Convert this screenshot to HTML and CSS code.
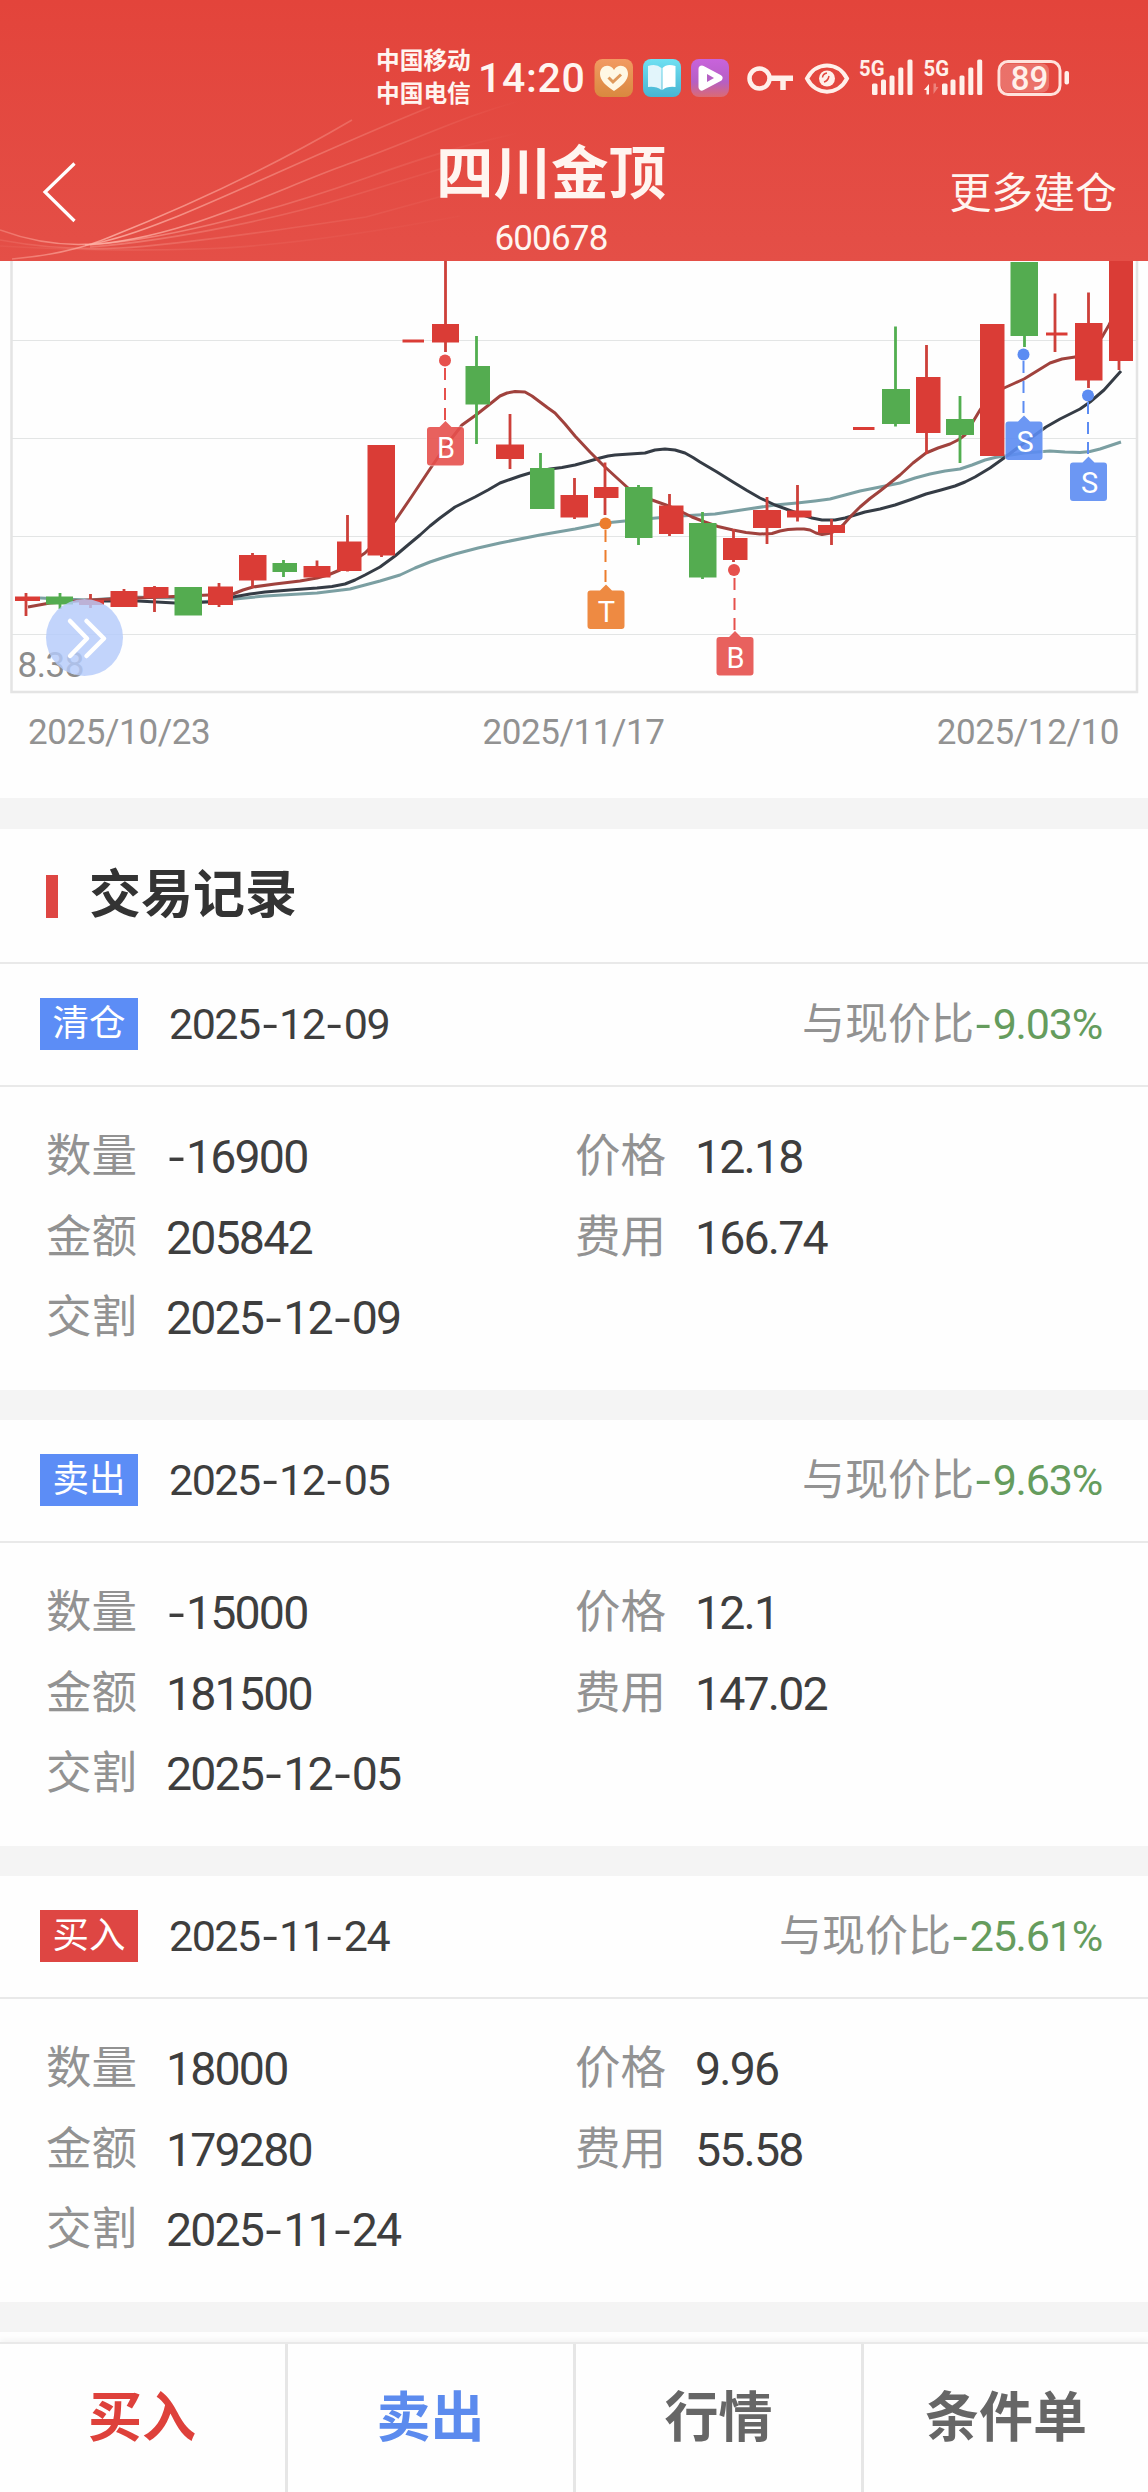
FILE: index.html
```html
<!DOCTYPE html>
<html lang="zh-CN">
<head>
<meta charset="utf-8">
<title>四川金顶 600678</title>
<link rel="stylesheet" href="styles.css">
</head>
<body>
<header class="header">
  <svg class="waves" viewBox="0 0 1148 261" fill="none" stroke-width="1.6">
    <defs>
      <linearGradient id="fade" gradientUnits="userSpaceOnUse" x1="0" y1="0" x2="520" y2="0">
        <stop offset="0" stop-color="#ffb4a8" stop-opacity=".35"/>
        <stop offset=".22" stop-color="#ffb4a8" stop-opacity=".8"/>
        <stop offset=".5" stop-color="#ffb4a8" stop-opacity=".45"/>
        <stop offset="1" stop-color="#ffb4a8" stop-opacity="0"/>
      </linearGradient>
    </defs>
    <g stroke="url(#fade)">
      <path d="M12 259Q70 254 110 237C190 205 270 168 352 120"/>
      <path d="M0 230Q46 247 92 244C160 232 270 172 430 107"/>
      <path d="M85 245C180 240 270 192 348 164S470 112 540 96"/>
      <path d="M90 245C180 238 290 205 366 178S470 144 531 130" opacity=".7"/>
      <path d="M90 247C180 240 290 215 348 197L450 166" opacity=".5"/>
      <path d="M0 240Q60 251 120 248T366 217L450 194" opacity=".4"/>
      <path d="M0 246Q100 252 200 249T460 216" opacity=".2"/>
    </g>
  </svg>

  <div class="status">
    <div class="carriers"><span>中国移动</span><span>中国电信</span></div>
    <span class="clock">14:20</span>
    <svg class="status-icons" width="490" height="50" viewBox="590 53 490 50">
      <defs>
        <linearGradient id="io" x2="0" y2="1"><stop stop-color="#f29a62"/><stop offset="1" stop-color="#d9893f"/></linearGradient>
        <linearGradient id="ib" x2="0" y2="1"><stop stop-color="#6fe0f2"/><stop offset="1" stop-color="#48b4d2"/></linearGradient>
        <linearGradient id="ip" x2="0" y2="1"><stop stop-color="#c863dc"/><stop offset=".6" stop-color="#b65fc4"/><stop offset="1" stop-color="#dc6a72"/></linearGradient>
      </defs>
      <rect x="594.5" y="59" width="38.5" height="38" rx="8" fill="url(#io)"/>
      <path d="M614 91C606 86 600 80 600 74C600 65 610 63 614 70C618 63 628 65 628 74C628 80 622 86 614 91Z" fill="#fff8e4"/>
      <path d="M608.500 77.500l4.500 4.500 8-7.500" fill="none" stroke="#df9a5c" stroke-width="3"/>
      <rect x="643" y="59" width="38" height="38" rx="8" fill="url(#ib)"/>
      <path d="M648 66Q656 63 661.500 68V90Q656 86 648 87Z" fill="#e2f5fb"/>
      <path d="M675.500 66Q667 63 662.500 68V90Q667 86 675.500 87Z" fill="#fff"/>
      <rect x="691" y="59" width="38" height="38" rx="8" fill="url(#ip)"/>
      <path d="M702 69L719 78L702 87Z" fill="#fff" stroke="#fff" stroke-width="7" stroke-linejoin="round"/>
      <path d="M707 74L714 78L707 82Z" fill="#b65fc4"/>
      <g stroke="#fff0ea" fill="none">
        <circle cx="759.500" cy="78.500" r="10" stroke-width="4.500"/>
        <path d="M770 78.200H793M783 78V90" stroke-width="5.500"/>
        <path d="M807 78.500C816 61 838 61 847 78.500C838 96 816 96 807 78.500Z" stroke-width="4"/>
      </g>
      <circle cx="827" cy="78.500" r="8" fill="#fff0ea"/>
      <path d="M822.500 77.500q.5-4 4.500-4.500M824 82q4-1 5-6" fill="none" stroke="#e3483f" stroke-width="1.500"/>
      <g fill="#fff0ea">
        <text x="859" y="75.700" class="net" textLength="25.500" lengthAdjust="spacingAndGlyphs">5G</text>
        <rect x="872" y="83.500" width="5.500" height="11.500" rx="1.500"/><rect x="881" y="79.500" width="5" height="15.500" rx="1.500"/><rect x="889.500" y="75.500" width="5" height="19.500" rx="1.500"/><rect x="898.300" y="67.500" width="5" height="27.500" rx="1.500"/><rect x="907.500" y="59.500" width="5" height="35.500" rx="1.500"/>
        <text x="923.500" y="75.700" class="net" textLength="25.500" lengthAdjust="spacingAndGlyphs">5G</text>
        <rect x="942" y="83.500" width="5.500" height="11.500" rx="1.500"/><rect x="950.500" y="79.500" width="5" height="15.500" rx="1.500"/><rect x="959.500" y="75.500" width="5" height="19.500" rx="1.500"/><rect x="968.300" y="67.500" width="5" height="27.500" rx="1.500"/><rect x="977.200" y="59.500" width="5" height="35.500" rx="1.500"/>
        <path d="M924 90l5-6v10.500h-2.500v-4.500z"/><path d="M938.500 87l-5 7v-10.500h2.500v3.500z" opacity=".35"/>
        <rect x="1001" y="63.500" width="48" height="29" rx="7" opacity=".25"/>
        <rect x="1064.500" y="71" width="4.500" height="13.500" rx="2"/>
        <text x="1029.500" y="89.500" class="level" text-anchor="middle">89</text>
      </g>
      <rect x="999" y="61.500" width="61" height="33" rx="9" fill="none" stroke="#ffe2dc" stroke-width="3"/>
    </svg>
  </div>

  <div class="titlebar">
    <svg class="back" width="40" height="64" viewBox="40 160 40 64"><path d="M74.500 163.500L45 192L74.500 221" fill="none" stroke="#fff" stroke-width="3.200"/></svg>
    <div class="stock"><h1>四川金顶</h1><span class="code">600678</span></div>
    <a class="more">更多建仓</a>
  </div>
</header>

<section class="chart-card">
  <svg class="chart" width="1148" height="434" viewBox="0 261 1148 434">
    <path d="M12 340.500H1136M12 438.500H1136M12 536.500H1136M12 634.500H1136" stroke="#e3e5e5"/>
    <path d="M11.500 261V692H1137V261" fill="none" stroke="#e4e4e4" stroke-width="2.500"/>
    <text x="17.500" y="677" class="price">8.38</text>
    <g class="ma">
      <polyline stroke="#7b9fa2" points="40,598 60,599 90,600 130,597 175,598 200,602 235,599 265,596 317,593 350,589 365,585 380,581 400,575 415,568 430,562 442,558 455,554 478,548 500,543 540,535 575,529 605,523 625,521 656,518 680,516 715,514 748,509 775,505 797,503 815,501 830,499 845,495 860,491 880,487 900,483 915,478 930,474 945,471 960,469 972,465 985,460 995,457.500 1004,456 1024,453 1050,451 1065,452 1080,452.500 1090,451.500 1100,449 1121,442"/>
      <polyline stroke="#353c45" points="90,601 138,601 175,603 208,602 233,597 250,594 265,592 290,590 317,588 332,586.500 345,584 355,580 365,575 380,567 395,556 408,545 420,535 430,526 440,518 455,507 475,497 488,490 500,483 510,479.500 520,476 530,473 550,469 562,467.500 575,465 588,461.500 600,458 608,456 615,455 630,454 645,453 655,450 665,449 675,450 685,453 693,457.500 700,462 717,472 733,482 747,490.500 760,498 775,505 797,513 812,518 822,520 835,520 845,518 855,515 865,512 880,509 895,505 911,499.500 926,494 941,490 955,486 965,482 975,477 990,468 1004,458 1024,443 1046,427 1060,419 1080,409 1090,402 1104,390 1121,371"/>
      <polyline stroke="#a0423d" points="28,607 50,603 90,600 233,594 243,590 253,587 275,584 300,581 317,578 328,575 340,570 353,561 365,553 380,538 395,521 412,496 430,469 445,447 462,425 476,415 490,404 500,396 507,393 515,391.500 525,392 532,396 540,402 548,408 555,413 565,424 575,436 590,452 605,467 617,478 628,488 640,496 652,500 666,505 680,511 692,517 705,522 718,526.500 733,530 746,532.500 760,534 772,533.500 780,531 788,529.500 797,529 804,529 810,530 816,533 822,534.500 831,533 837,530 843,525 852,515 860,507 870,498.500 880,491 890,483 900,475 913,463 926,453 938,448 950,444 958,440 965,435 971,425 980,410 990,395 1004,388 1014,383.500 1024,379 1037,371 1050,363 1062,359 1075,357 1090,350 1102,337 1109,325 1119,305"/>
    </g>
    <g class="up wick"><path d="M26 593V616M90.500 594V608M124 589V607M154.500 586V612M219 583V607M252.500 553V588M317 560.500V577M347.500 515V571.500M381.500 450V557M445.500 261V352M510 414V469M574.500 478V519M605 462.500V515M669.500 494V536M733.500 529V562M767 497V544M797.500 485V521.500M831.500 519V545M926.500 345V454M1055 293.500V352M1088.500 292.500V388M1119 300V370"/></g>
    <g class="down wick"><path d="M60 593V609M283.500 560V577M476.500 336V444M540.500 453V480M638.500 485V545M702.500 512V579M895.500 326.500V426.500M960 396V463M1024.500 320V347"/></g>
    <g class="up body"><path d="M15 596.500h25v4.500h-25zM79 600h25v5h-25zM110.500 591h27v16h-27zM143.500 587h25v11h-25zM208 586.500h25v18.500h-25zM239 555h27.500v25.500h-27.500zM303.500 566h27v11.500h-27zM337 541.500h24.500v29.500h-24.500zM367.500 445h27.500v110.500h-27.500zM402.500 339.500h21.500v3h-21.500zM432 324h27v18.500h-27zM496 444.500h28v14.500h-28zM560.500 495h27.500v22.500h-27.500zM594 487h24.500v11h-24.500zM659 505.500h24.500v28.500h-24.500zM723 538h24.500v22h-24.500zM753 510h28v18h-28zM787 510.500h24.500v7h-24.500zM818 525h27v8h-27zM853 427h21.500v3h-21.500zM916 377h24.500v56h-24.500zM980 324h24.500v132h-24.500zM1046 332.500h21.500v3h-21.500zM1075 323h27.500v57.500h-27.500zM1109 261h24v100h-24z"/></g>
    <g class="down body"><path d="M46 596.500h27v8h-27zM174.500 587h27.500v28.500h-27.500zM272.500 563h24.500v9h-24.500zM465.500 366h24.500v38.500h-24.500zM530 468h24.500v41h-24.500zM625 487h27.500v51h-27.500zM689 523h27.500v54.500h-27.500zM882 389h28v35h-28zM946 419h28v16h-28zM1010.500 262h27.500v74h-27.500z"/></g>

    <defs><path id="flag" d="M-15.500 0H-6L0-6L6 0H15.500Q18.500 0 18.500 3V35.500Q18.500 38.500 15.500 38.500H-15.500Q-18.500 38.500-18.500 35.500V3Q-18.500 0-15.500 0Z" stroke="#fff" stroke-opacity=".6" stroke-width="1.500" paint-order="stroke"/></defs>
    <g class="marker buy"><path d="M445 368V422"/><circle cx="445" cy="360.500" r="6"/><use href="#flag" x="445.500" y="427"/><text x="446" y="457.500">B</text></g>
    <g class="marker both"><path d="M605.500 530V586"/><circle cx="605.500" cy="523.500" r="6"/><use href="#flag" x="606" y="590.500"/><text x="606.500" y="622">T</text></g>
    <g class="marker buy"><path d="M734.500 578V632"/><circle cx="734" cy="570" r="6"/><use href="#flag" x="735" y="637"/><text x="735.500" y="667.500">B</text></g>
    <g class="marker sell"><path d="M1023.500 361V416"/><circle cx="1023.500" cy="354.500" r="6"/><use href="#flag" x="1024" y="421.500"/><text x="1025" y="452">S</text></g>
    <g class="marker sell"><path d="M1088 402V458"/><circle cx="1088" cy="395.500" r="6"/><use href="#flag" x="1088.500" y="462.500"/><text x="1089.500" y="493">S</text></g>

    <circle cx="84.500" cy="637.500" r="38.500" fill="#b5cbfa" fill-opacity=".82"/>
    <path d="M70 621L87 638.500L70 656M86.500 621L104 638.500L86.500 656" fill="none" stroke="#fff" stroke-width="4.500" stroke-linecap="round" stroke-linejoin="round"/>
  </svg>
  <div class="axis"><span>2025/10/23</span><span>2025/11/17</span><span>2025/12/10</span></div>
</section>

<main class="records">
  <h2 class="section-title">交易记录</h2>

  <article class="record">
    <div class="record-head"><span class="tag sell-tag">清仓</span><time>2025<i>-</i>12<i>-</i>09</time><span class="compare">与现价比<b><i>-</i>9.03%</b></span></div>
    <dl class="details">
      <div><dt>数量</dt><dd><i>-</i>16900</dd></div><div><dt>价格</dt><dd>12.18</dd></div>
      <div><dt>金额</dt><dd>205842</dd></div><div><dt>费用</dt><dd>166.74</dd></div>
      <div><dt>交割</dt><dd>2025<i>-</i>12<i>-</i>09</dd></div>
    </dl>
  </article>

  <article class="record">
    <div class="record-head"><span class="tag sell-tag">卖出</span><time>2025<i>-</i>12<i>-</i>05</time><span class="compare">与现价比<b><i>-</i>9.63%</b></span></div>
    <dl class="details">
      <div><dt>数量</dt><dd><i>-</i>15000</dd></div><div><dt>价格</dt><dd>12.1</dd></div>
      <div><dt>金额</dt><dd>181500</dd></div><div><dt>费用</dt><dd>147.02</dd></div>
      <div><dt>交割</dt><dd>2025<i>-</i>12<i>-</i>05</dd></div>
    </dl>
  </article>

  <article class="record">
    <div class="record-head"><span class="tag buy-tag">买入</span><time>2025<i>-</i>11<i>-</i>24</time><span class="compare">与现价比<b><i>-</i>25.61%</b></span></div>
    <dl class="details">
      <div><dt>数量</dt><dd>18000</dd></div><div><dt>价格</dt><dd>9.96</dd></div>
      <div><dt>金额</dt><dd>179280</dd></div><div><dt>费用</dt><dd>55.58</dd></div>
      <div><dt>交割</dt><dd>2025<i>-</i>11<i>-</i>24</dd></div>
    </dl>
  </article>
</main>

<nav class="actions">
  <a class="buy-action">买入</a><a class="sell-action">卖出</a><a>行情</a><a>条件单</a>
</nav>
</body>
</html>
```
FILE: styles.css
```css
* { box-sizing: border-box; margin: 0; padding: 0; }

body {
  display: flex;
  flex-direction: column;
  width: 1148px;
  height: 2492px;
  overflow: hidden;
  background: #fefefe;
  color: #3e3e3e;
  font-family: Roboto, "Noto Sans CJK SC", sans-serif;
}

i { font-style: normal; }

/* Header */
.header {
  position: relative;
  flex: none;
  height: 261px;
  background: linear-gradient(#e3443b, #e44f47);
  color: #fff5f0;
}
.waves { position: absolute; inset: 0; width: 100%; height: 100%; }
.status {
  position: relative;
  display: flex;
  align-items: center;
  height: 103px;
  padding: 53px 68px 0 376px;
}
.carriers {
  display: flex;
  flex-direction: column;
  width: 102px;
  font-size: 23.7px;
  font-weight: 700;
  line-height: 33.5px;
}
.clock { width: 112px; font-size: 41px; font-weight: 500; line-height: 50px; letter-spacing: .7px; }
.status-icons { flex: none; }
.net { font-size: 22.5px; font-weight: 700; }
.level { font-size: 33px; font-weight: 500; }
.titlebar {
  position: relative;
  display: grid;
  grid-template-columns: 300px 422px 1fr;
  grid-template-rows: 158px;
  align-items: center;
  padding: 0 31px 0 40px;
}
.back { margin-top: 20px; }
.stock { display: flex; flex-direction: column; align-items: center; align-self: start; padding-top: 36px; }
.stock h1 { font-size: 57.5px; font-weight: 700; line-height: 72px; }
.code { font-size: 35px; line-height: 55px; letter-spacing: -.8px; }
.more { justify-self: end; padding-top: 24px; font-size: 41.9px; line-height: 60px; }

/* Chart */
.chart-card { flex: none; height: 537px; }
.chart { display: block; }
.price { fill: #8c8c8c; font-size: 35px; letter-spacing: -.4px; }
.ma { fill: none; stroke-width: 3; stroke-linejoin: round; }
.wick { stroke-width: 2.8; }
.up.wick { stroke: #cd403a; }
.down.wick { stroke: #52ae50; }
.up.body { fill: #da3c36; }
.down.body { fill: #54ac50; }
.marker path { stroke-width: 2; stroke-dasharray: 12 8; }
.marker use { fill-opacity: .9; }
.marker text { fill: #fff; font-size: 29px; text-anchor: middle; stroke: none; }
.buy { fill: #e6504c; }
.buy > path { stroke: #e6504c; }
.both { fill: #ec7d2d; }
.both > path { stroke: #ec7d2d; }
.sell { fill: #5c8cf2; }
.sell > path { stroke: #5c8cf2; }
.axis {
  display: flex;
  justify-content: space-between;
  padding: 13px 29px 0 28px;
  color: #929292;
  font-size: 35px;
  line-height: 50px;
  letter-spacing: -.4px;
}

/* Trade records */
.records { flex: none; border-top: 31px solid #f4f4f4; }
.section-title {
  display: flex;
  align-items: center;
  gap: 31px;
  height: 135px;
  padding: 0 46px;
  border-bottom: 2px solid #e9e9e9;
  color: #333;
  font-size: 52px;
  font-weight: 700;
  line-height: 70px;
}
.section-title::before { content: ""; width: 12px; height: 43px; margin-top: 2px; background: #de4643; }
.record { height: 456px; border-bottom: 30px solid #f4f4f4; }
.record-head {
  display: flex;
  align-items: center;
  height: 122.5px;
  padding: 0 46px 0 40px;
  border-bottom: 2px solid #e9e9e9;
  font-size: 43px;
}
.tag {
  width: 98px;
  height: 52px;
  margin-right: 31px;
  color: #fff;
  font-size: 36.500px;
  line-height: 51px;
  text-align: center;
}
.sell-tag { background: #5c8df6; }
.buy-tag { background: #de4643; }
time { letter-spacing: -1.500px; }
time i, dd i, .compare i {
  display: inline-block;
  margin: 0 5px 0 4px;
  transform: scaleX(1.25);
}
.compare { margin-left: auto; color: #929292; line-height: 60px; }
.compare b { color: #659c5d; font-weight: 400; letter-spacing: -1.200px; }
.compare b i { margin: 0 5px 0 3px; }
.details {
  display: grid;
  grid-template-columns: 529px 1fr;
  grid-auto-rows: 80.500px;
  padding: 30.5px 0 0 46px;
}
.details div { display: flex; align-items: center; }
.details dt { width: 120px; color: #929292; font-size: 45.500px; line-height: 66px; }
.details dd { font-size: 46.500px; line-height: 66px; letter-spacing: -1.850px; }

/* Bottom actions */
.actions {
  display: grid;
  grid-template-columns: 285px 288px 288px 1fr;
  flex: 1;
  margin-top: 10px;
  border-top: 2px solid #e9e9e9;
  box-shadow: 0 -3px 5px rgba(0, 0, 0, .04);
  color: #666;
  font-size: 54px;
  font-weight: 700;
  line-height: 150px;
  text-align: center;
}
.actions a { margin-left: -1px; }
.actions a + a { margin-left: 0; border-left: 3px solid #e6e6e6; }
.buy-action { color: #de413b; }
.sell-action { color: #5c8bee; }
```
